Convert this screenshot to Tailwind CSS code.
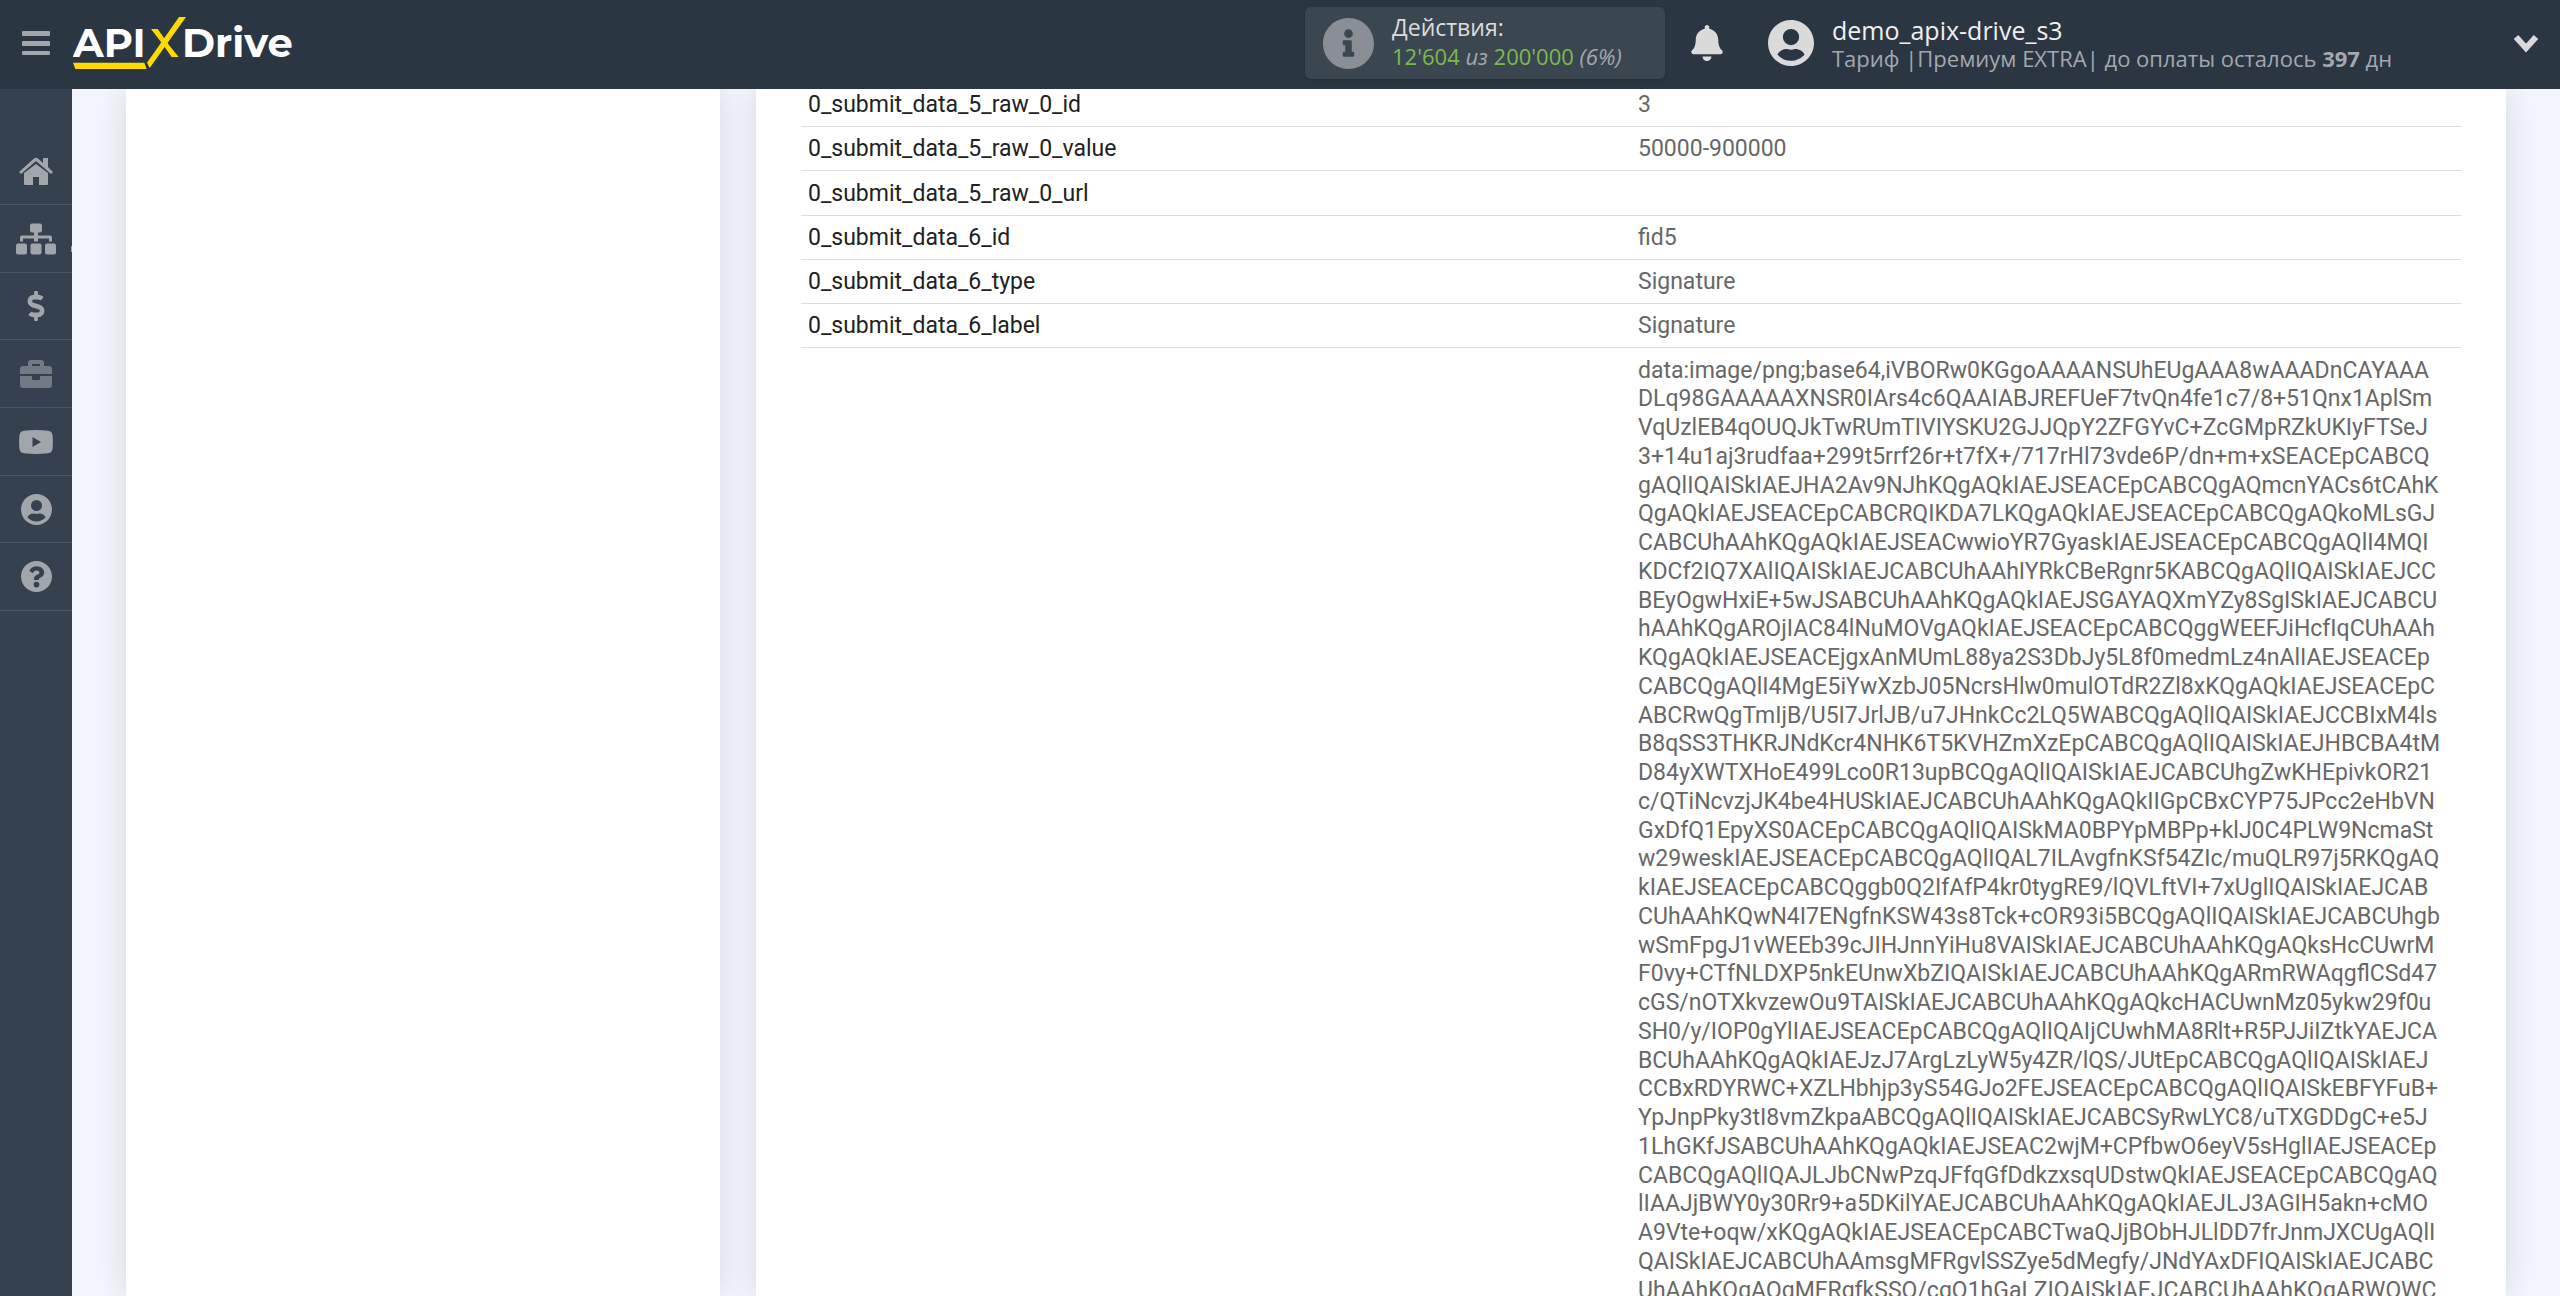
<!DOCTYPE html>
<html lang="ru">

<head>
    <meta charset="UTF-8">
    <meta name="viewport" content="width=device-width, initial-scale=1.0">
    <title>APIX-Drive</title>

    <!-- Tailwind CSS -->
    <script src="https://cdn.jsdelivr.net/npm/@tailwindcss/browser@4"></script>
</head>

<body class="h-screen overflow-hidden flex flex-col bg-[#f2f6fc] font-['Roboto',sans-serif]">

    <!-- Header -->
    <header class="h-[89px] shrink-0 flex items-center bg-[#2b3643] pl-[22px] pr-[22px] pb-[3px] font-['Open_Sans',sans-serif] relative z-10">
        <button class="mr-[23px]" aria-label="Меню">
            <svg class="w-7 h-6" viewBox="0 0 28 24" fill="#a1a6ab"><rect width="28" height="5" rx="1" /><rect y="10" width="28" height="5" rx="1" /><rect y="20" width="28" height="4" rx="1" /></svg>
        </button>
        <a href="#" aria-label="APIXDrive">
            <svg class="w-[222px] h-[54px]" viewBox="0 0 222 54">
                <g fill="#fff" font-family="Montserrat, Lato, sans-serif" font-weight="700" font-size="40">
                    <text x="0" y="41">API</text>
                    <text x="109" y="41">Drive</text>
                </g>
                <path fill="#ffd900" d="M0 46.700h71.300l2.400 6.300H2.300zM106 1h7L76.700 52 74 46.700z" />
                <path fill="#ffd900" d="M78 13h6.700L96 29l9.700 12h-7L88 26z" />
            </svg>
        </a>

        <div class="ml-auto mr-[26px] w-[360px] h-[72px] flex items-center rounded-md bg-[#3b4750] pl-[18px] gap-[18px] shadow">
            <svg class="w-[51px] h-[51px]" viewBox="8 8 496 496" fill="#8a8f95"><path d="M256 8C119 8 8 119 8 256s111 248 248 248 248-111 248-248S393 8 256 8zm0 110a42 42 0 1 1 0 84 42 42 0 0 1 0-84zm56 254a12 12 0 0 1-12 12h-88a12 12 0 0 1-12-12v-24a12 12 0 0 1 12-12h12v-64h-12a12 12 0 0 1-12-12v-24a12 12 0 0 1 12-12h64a12 12 0 0 1 12 12v100h12a12 12 0 0 1 12 12z" /></svg>
            <div class="text-[22px] leading-[29px] text-[#a3a8ad] pb-0.5">
                <div class="text-[23px] text-[#dcdcdc]">Действия:</div>
                <div><span class="text-[#7cb950]">12'604</span> <i>из</i> <span class="text-[#7cb950]">200'000</span> <i>(6%)</i></div>
            </div>
        </div>
        <button class="mr-[45px]" aria-label="Уведомления">
            <svg class="w-8 h-9" viewBox="0 0 448 512" fill="#dadada"><path d="M224 512c35.320 0 63.970-28.650 63.970-64H160.030c0 35.350 28.650 64 63.970 64zm215.390-149.710c-19.320-20.760-55.470-51.990-55.470-154.290 0-77.700-54.480-139.900-127.940-155.160V32c0-17.670-14.320-32-31.980-32s-31.980 14.330-31.980 32v20.840C118.560 68.100 64.080 130.300 64.080 208c0 102.300-36.150 133.530-55.470 154.290-6 6.450-8.660 14.160-8.610 21.710.11 16.400 12.980 32 32.100 32h383.800c19.120 0 32-15.600 32.100-32 .05-7.550-2.610-15.270-8.610-21.710z" /></svg>
        </button>
        <a href="#" class="flex items-center gap-[18px] w-[770px]">
            <svg class="w-[46px] h-[46px]" viewBox="0 0 496 496" fill="#dadada"><path d="M248 0C111 0 0 111 0 248s111 248 248 248 248-111 248-248S385 0 248 0zm0 96a88 88 0 1 1 0 176 88 88 0 0 1 0-176zm0 344c-58.700 0-111.300-26.600-146.500-68.200 18.800-35.400 55.600-59.800 98.500-59.800 2.400 0 4.800.4 7.100 1.100 13 4.200 26.600 6.900 40.900 6.900s28-2.700 40.900-6.900c2.300-.7 4.700-1.100 7.100-1.100 42.900 0 79.700 24.400 98.500 59.800C359.300 413.400 306.700 440 248 440z" /></svg>
            <span class="grow pt-0.5 text-[#f0f0f0]">
                <span class="block text-[25px] leading-[28px]">demo_apix-drive_s3</span>
                <span class="block text-[22px] leading-[28px] text-[#a3a8ad]">Тариф |Премиум EXTRA| до оплаты осталось <b>397</b> дн</span>
            </span>
            <svg class="w-6 h-5" viewBox="0 0 24 20" fill="none" stroke="#dadada" stroke-width="6"><path d="M2 4l10 11L22 4" /></svg>
        </a>
    </header>

    <div class="grow flex min-h-0">
        <!-- Sidebar -->
        <nav class="w-[72px] shrink-0 bg-[#36414f] pt-12">
            <a href="#" aria-label="Главная" class="h-[68px] flex items-center justify-center border-b border-[#4b5561]">
                <svg class="w-9 h-7" viewBox="0 0 36 28" fill="#a1a6ab"><path d="M18 7L6 16v11q0 1 1 1h8v-8h6v8h8q1 0 1-1V16z" /><path d="M1 15l15-13.500q2-1.500 4 0l5 4.500V1h5v9l5 5-2 2L18 4 3 17z" /></svg>
            </a>
            <a href="#" aria-label="Связи" class="relative h-[68px] flex items-center justify-center border-b border-[#4b5561]">
                <svg class="w-10 h-8" viewBox="0 0 40 31" fill="#a1a6ab"><rect x="14" width="12" height="9" rx="2" /><path d="M18 8h4v4h12q2 0 2 2v4h-3v-3H22v3h-4v-3H7v3H4v-4q0-2 2-2h12z" /><rect y="20" width="11" height="11" rx="2" /><rect x="14.500" y="20" width="11" height="11" rx="2" /><rect x="29" y="20" width="11" height="11" rx="2" /></svg>
                <span class="absolute right-0 bottom-5 w-px h-1.5 bg-[#a1a6ab]"></span>
            </a>
            <a href="#" aria-label="Оплата" class="h-[67px] flex items-center justify-center border-b border-[#4b5561]">
                <svg class="w-[18px] h-[30px]" viewBox="0 0 288 512" fill="#a1a6ab"><path d="M209.200 233.400l-108-31.600C88.700 198.200 80 186.500 80 173.500c0-16.300 13.200-29.500 29.500-29.500h66.300c12.200 0 24.200 3.700 34.200 10.500 6.100 4.100 14.300 3.100 19.500-2l34.800-34c7.100-6.900 6.100-18.400-1.800-24.500C238 74.800 207.400 64.100 176 64V16c0-8.800-7.200-16-16-16h-32c-8.800 0-16 7.200-16 16v48h-2.500C45.800 64-5.400 118.700.5 183.600c4.200 46.100 39.400 83.600 83.800 96.600l102.500 30c12.500 3.700 21.200 15.300 21.200 28.300 0 16.300-13.200 29.500-29.500 29.500h-66.300C100 368 88 364.300 78 357.500c-6.100-4.100-14.300-3.100-19.500 2l-34.800 34c-7.100 6.900-6.100 18.400 1.800 24.500 24.500 19.200 55.100 29.900 86.500 30v48c0 8.800 7.200 16 16 16h32c8.800 0 16-7.200 16-16v-48.200c46.600-.9 90.300-28.600 105.700-72.700 21.500-61.600-14.600-124.800-72.500-141.700z" /></svg>
            </a>
            <a href="#" aria-label="Проекты" class="h-[68px] flex items-center justify-center border-b border-[#4b5561]">
                <svg class="w-8 h-7" viewBox="0 0 32 28" fill="#727a84"><path fill-rule="evenodd" d="M3 6h5V3q0-3 3-3h10q3 0 3 3v3h5q3 0 3 3v5H0V9q0-3 3-3zm9-2v2h8V4z" /><path d="M0 16h12v3q0 1 1 1h6q1 0 1-1v-3h12v9q0 3-3 3H3q-3 0-3-3z" /></svg>
            </a>
            <a href="#" aria-label="Видео" class="h-[68px] flex items-center justify-center border-b border-[#4b5561]">
                <svg class="w-[34px] h-6" viewBox="0 0 34 24" fill="#a1a6ab"><path fill-rule="evenodd" d="M5 .7Q17-.7 29 .7q4 .5 4.500 4.300.8 7 0 14-.5 3.800-4.500 4.300-12 1.400-24 0Q1 22.800.5 19q-.8-7 0-14Q1 1.200 5 .7zM13.500 7v10l8.500-5z" /></svg>
            </a>
            <a href="#" aria-label="Профиль" class="h-[67px] flex items-center justify-center border-b border-[#4b5561]">
                <svg class="w-[31px] h-[31px]" viewBox="0 0 496 496" fill="#a1a6ab"><path d="M248 0C111 0 0 111 0 248s111 248 248 248 248-111 248-248S385 0 248 0zm0 96a88 88 0 1 1 0 176 88 88 0 0 1 0-176zm0 344c-58.700 0-111.300-26.600-146.500-68.200 18.800-35.400 55.600-59.800 98.500-59.800 2.400 0 4.800.4 7.100 1.100 13 4.200 26.600 6.900 40.900 6.900s28-2.700 40.900-6.900c2.300-.7 4.700-1.100 7.100-1.100 42.900 0 79.700 24.400 98.500 59.800C359.300 413.400 306.700 440 248 440z" /></svg>
            </a>
            <a href="#" aria-label="Помощь" class="h-[68px] flex items-center justify-center border-b border-[#4b5561]">
                <svg class="w-[31px] h-[31px]" viewBox="8 8 496 496" fill="#a1a6ab"><path d="M504 256c0 137-111 248-248 248S8 393 8 256 119 8 256 8s248 111 248 248zM262.700 90c-54.500 0-89.300 23-116.500 63.800-3.500 5.300-2.400 12.400 2.700 16.300l34.700 26.300c5.200 3.900 12.600 3 16.700-2.100 17.900-22.700 30.100-35.800 57.300-35.800 20.400 0 45.700 13.100 45.700 33 0 15-12.400 22.700-32.500 34C247.100 238.500 216 254.900 216 296v4c0 6.600 5.400 12 12 12h56c6.600 0 12-5.400 12-12v-1.300c0-28.500 83.200-29.600 83.200-106.700 0-58-60.200-102-116.500-102zM256 338a46 46 0 1 0 0 92 46 46 0 0 0 0-92z" /></svg>
            </a>
        </nav>

        <main class="grow min-w-0 flex gap-9 px-[54px]">
            <section class="w-[594px] shrink-0 bg-white shadow-[0_0_30px_rgba(0,0,0,0.12)]"></section>

            <section class="grow min-w-0 bg-white shadow-[0_0_30px_rgba(0,0,0,0.12)] px-[45px] overflow-hidden">
                <table class="w-full table-fixed -mt-[7px] text-[23px] leading-tight text-left text-[#212121]">
                    <tbody>
                        <tr class="h-11 border-b border-[#dddddd]">
                            <th scope="row" class="px-[7px] pt-[3px] font-normal">0_submit_data_5_raw_0_id</th>
                            <td class="px-[7px] pt-[3px] text-[#676767]">3</td>
                        </tr>
                        <tr class="h-11 border-b border-[#dddddd]">
                            <th scope="row" class="px-[7px] pt-[3px] font-normal">0_submit_data_5_raw_0_value</th>
                            <td class="px-[7px] pt-[3px] text-[#676767]">50000-900000</td>
                        </tr>
                        <tr class="h-[45px] border-b border-[#dddddd]">
                            <th scope="row" class="px-[7px] pt-[3px] font-normal">0_submit_data_5_raw_0_url</th>
                            <td class="px-[7px] pt-[3px] text-[#676767]"></td>
                        </tr>
                        <tr class="h-11 border-b border-[#dddddd]">
                            <th scope="row" class="px-[7px] pt-[3px] font-normal">0_submit_data_6_id</th>
                            <td class="px-[7px] pt-[3px] text-[#676767]">fid5</td>
                        </tr>
                        <tr class="h-11 border-b border-[#dddddd]">
                            <th scope="row" class="px-[7px] pt-[3px] font-normal">0_submit_data_6_type</th>
                            <td class="px-[7px] pt-[3px] text-[#676767]">Signature</td>
                        </tr>
                        <tr class="h-11 border-b border-[#dddddd]">
                            <th scope="row" class="px-[7px] pt-[3px] font-normal">0_submit_data_6_label</th>
                            <td class="px-[7px] pt-[3px] text-[#676767]">Signature</td>
                        </tr>
                        <tr>
                            <th></th>
                            <td class="px-[7px] py-[9px] text-[#676767] whitespace-pre">data:image/png;base64,iVBORw0KGgoAAAANSUhEUgAAA8wAAADnCAYAAA
DLq98GAAAAAXNSR0IArs4c6QAAIABJREFUeF7tvQn4fe1c7/8+51Qnx1AplSm
VqUzlEB4qOUQJkTwRUmTIVIYSKU2GJJQpY2ZFGYvC+ZcGMpRZkUKIyFTSeJ
3+14u1aj3rudfaa+299t5rrf26r+t7fX+/717rHl73vde6P/dn+m+xSEACEpCABCQ
gAQlIQAISkIAEJHA2Av9NJhKQgAQkIAEJSEACEpCABCQgAQmcnYACs6tCAhK
QgAQkIAEJSEACEpCABCRQIKDA7LKQgAQkIAEJSEACEpCABCQgAQkoMLsGJ
CABCUhAAhKQgAQkIAEJSEACwwioYR7GyaskIAEJSEACEpCABCQgAQlI4MQI
KDCf2IQ7XAlIQAISkIAEJCABCUhAAhIYRkCBeRgnr5KABCQgAQlIQAISkIAEJCC
BEyOgwHxiE+5wJSABCUhAAhKQgAQkIAEJSGAYAQXmYZy8SgISkIAEJCABCU
hAAhKQgAROjIAC84lNuMOVgAQkIAEJSEACEpCABCQggWEEFJiHcfIqCUhAAh
KQgAQkIAEJSEACEjgxAnMUmL88ya2S3DbJy5L8f0medmLz4nAlIAEJSEACEp
CABCQgAQlI4MgE5iYwXzbJ05NcrsHlw0mulOTdR2Zl8xKQgAQkIAEJSEACEpC
ABCRwQgTmIjB/U5I7JrlJB/u7JHnkCc2LQ5WABCQgAQlIQAISkIAEJCCBIxM4ls
B8qSS3THKRJNdKcr4NHK6T5KVHZmXzEpCABCQgAQlIQAISkIAEJHBCBA4tM
D84yXWTXHoE499Lco0R13upBCQgAQlIQAISkIAEJCABCUhgZwKHEpivkOR21
c/QTiNcvzjJK4be4HUSkIAEJCABCUhAAhKQgAQkIIGpCBxCYP75JPcc2eHbVN
GxDfQ1EpyXS0ACEpCABCQgAQlIQAISkMA0BPYpMBPp+klJ0C4PLW9NcmaSt
w29weskIAEJSEACEpCABCQgAQlIQAL7ILAvgfnKSf54ZIc/muQLR97j5RKQgAQ
kIAEJSEACEpCABCQggb0Q2IfAfP4kr0tygRE9/lQVLftVI+7xUglIQAISkIAEJCAB
CUhAAhKQwN4I7ENgfnKSW43s8Tck+cOR93i5BCQgAQlIQAISkIAEJCABCUhgb
wSmFpgJ1vWEEb39cJIHJnnYiHu8VAISkIAEJCABCUhAAhKQgAQksHcCUwrM
F0vy+CTfNLDXP5nkEUnwXbZIQAISkIAEJCABCUhAAhKQgARmRWAqgflCSd47
cGS/nOTXkvzewOu9TAISkIAEJCABCUhAAhKQgAQkcHACUwnMz05ykw29f0u
SH0/y/IOP0gYlIAEJSEACEpCABCQgAQlIQAIjCUwhMA8Rlt+R5PJJiIZtkYAEJCA
BCUhAAhKQgAQkIAEJzJ7ArgLzLyW5y4ZR/lQS/JUtEpCABCQgAQlIQAISkIAEJ
CCBxRDYRWC+XZLHbhjp3yS54GJo2FEJSEACEpCABCQgAQlIQAISkEBFYFuB+
YpJnpPky3tI8vmZkpaABCQgAQlIQAISkIAEJCABCSyRwLYC8/uTXGDDgC+e5J
1LhGKfJSABCUhAAhKQgAQkIAEJSEAC2wjM+CPfbwO6eyV5sHglIAEJSEACEp
CABCQgAQlIQAJLJbCNwPzqJFfqGfDdkzxsqUDstwQkIAEJSEACEpCABCQgAQ
lIAAJjBWY0y30Rr9+a5DKilYAEJCABCUhAAhKQgAQkIAEJLJ3AGIH5akn+cMO
A9Vte+oqw/xKQgAQkIAEJSEACEpCABCTwaQJjBObHJLlDD7frJnmJXCUgAQlI
QAISkIAEJCABCUhAAmsgMFRgvlSSZye5dMegfy/JNdYAxDFIQAISkIAEJCABC
UhAAhKQgAQgMFRgfkSSO/cgQ1hGaLZIQAISkIAEJCABCUhAAhKQgARWQWC</td>
                        </tr>
                    </tbody>
                </table>
            </section>
        </main>
    </div>

</body>

</html>
